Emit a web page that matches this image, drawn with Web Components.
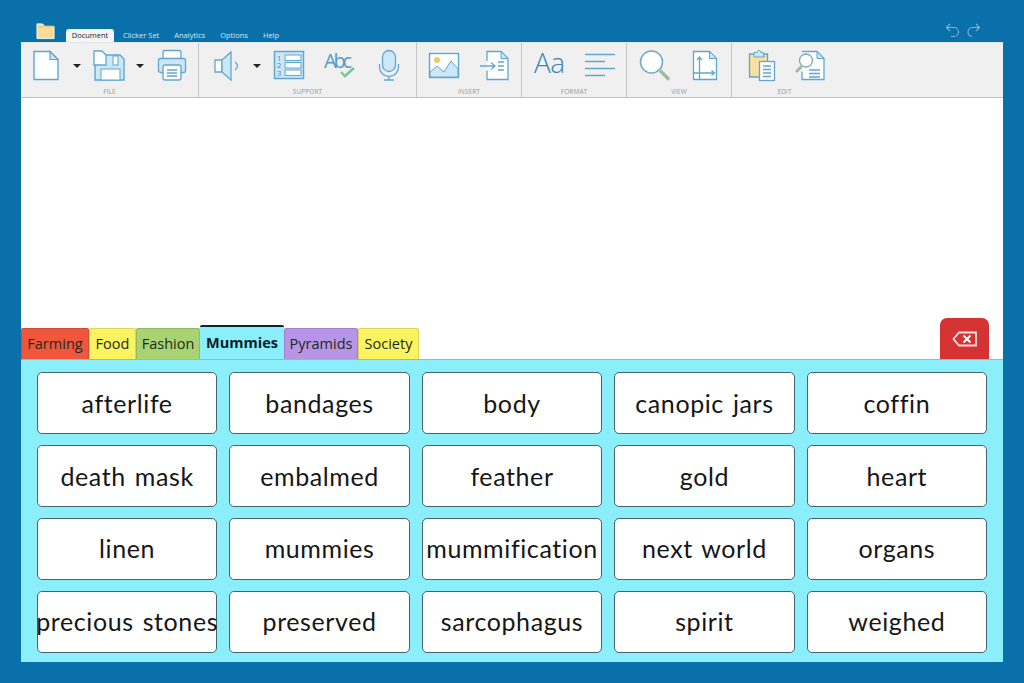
<!DOCTYPE html>
<html><head><meta charset="utf-8"><title>Clicker</title>
<style>
html,body{margin:0;padding:0;background:#0a70a9;}
</style></head><body>
<clicker-app></clicker-app>
<script>
const S='#62a6cf',F='#cce7f8',W='#fdfefe';
const L=`fill="none" stroke="${S}" stroke-width="1.3"`;
const ICONS={
 newdoc:`<path d="M4 2.500h16l8 8v20H4z" fill="${W}" stroke="${S}" stroke-width="1.4"/><path d="M20 2.500l8 8h-8z" fill="${F}" stroke="${S}" stroke-width="1.2"/>`,
 save:`<path d="M2 6h25l4 4v21H2z" fill="${F}" stroke="${S}" stroke-width="1.4"/><path d="M1 2h8l4 4v10H1z" fill="${W}" stroke="${S}" stroke-width="1.3"/><rect x="20" y="7" width="5" height="9" fill="${W}" stroke="${S}"/><rect x="8" y="20" width="19" height="11" fill="${W}" stroke="${S}"/>`,
 print:`<path d="M7 10V3a1.500 1.500 0 0 1 1.500-1.500h15A1.500 1.500 0 0 1 25 3v7" fill="${W}" stroke="${S}" stroke-width="1.3"/><rect x="2.500" y="9.500" width="27" height="14" rx="2" fill="${F}" stroke="${S}" stroke-width="1.3"/><rect x="7" y="16" width="18" height="15" rx="2" fill="${W}" stroke="${S}" stroke-width="1.3"/><path d="M11 21h10M11 24h10M11 27h10" ${L}/>`,
 speaker:`<path d="M4 11h7v12H4z" fill="${W}" stroke="${S}" stroke-width="1.3"/><path d="M11 11l9-8v28l-9-8z" fill="${F}" stroke="${S}" stroke-width="1.3"/><path d="M24 13q5 4 0 8" ${L}/>`,
 list:`<rect x="1.500" y="2.500" width="29" height="27" fill="${F}" stroke="${S}" stroke-width="1.5"/><rect x="12" y="6" width="16" height="5.500" fill="${W}" stroke="${S}"/><rect x="12" y="13.500" width="16" height="5.500" fill="${W}" stroke="${S}"/><rect x="12" y="21" width="16" height="5.500" fill="${W}" stroke="${S}"/><text x="4" y="11.500" font-family="Open Sans" font-size="7.500" fill="#3f89b8">1</text><text x="4" y="19" font-family="Open Sans" font-size="7.500" fill="#3f89b8">2</text><text x="4" y="26.500" font-family="Open Sans" font-size="7.500" fill="#3f89b8">3</text>`,
 abc:`<text x="0" y="19" font-family="Open Sans" font-size="20" fill="#5a9ac6" textLength="28">Abc</text><path d="M17 23l4 4 9-8" fill="none" stroke="#7cc595" stroke-width="2.400"/>`,
 mic:`<rect x="9.500" y="1.500" width="13" height="21" rx="6.500" fill="${F}" stroke="${S}" stroke-width="1.3"/><path d="M6.500 15v3a9.500 9.500 0 0 0 19 0v-3M16 27.500V31M11 31h10" ${L}/>`,
 image:`<rect x="1.500" y="4.500" width="29" height="24" fill="${W}" stroke="${S}" stroke-width="1.4"/><circle cx="9" cy="11" r="3" fill="#f2c56b"/><path d="M2 23l7-6 7 6 7-11 7 8v8H2z" fill="${F}" stroke="${S}"/>`,
 insert:`<path d="M8 12V2.500h14l7 7v21H8v-9" fill="${W}" stroke="${S}" stroke-width="1.3"/><path d="M22 2.500l7 7h-7z" fill="${F}" stroke="${S}"/><path d="M1 17h15M12 13.500l4 3.500-4 3.500M19 13h6M19 17h6M19 21h6" ${L}/>`,
 aa:`<text x="0" y="24" font-family="Open Sans" font-weight="300" font-size="28" fill="#3d85b5" textLength="31">Aa</text>`,
 align:`<path d="M1 5.500h30M1 12.500h20M1 19.500h30M1 26.500h20" ${L}/>`,
 mag:`<circle cx="12.500" cy="13" r="11" fill="${W}" stroke="#75a9bf" stroke-width="1.500"/><path d="M21 21.500l9 9" stroke="#9dbb98" stroke-width="3.200" fill="none"/>`,
 page:`<path d="M4.500 2.500h16l7 7v21H4.500z" fill="${W}" stroke="${S}" stroke-width="1.300"/><path d="M20.500 2.500l7 7h-7z" fill="${F}" stroke="${S}"/><path d="M10.500 30V8M8 11l2.500-3 2.500 3M4.500 24h21M22.500 21.500l3 2.500-3 2.500" ${L}/>`,
 clip:`<path d="M3.500 5h18v23h-18z" fill="#fbdf9e" stroke="${S}" stroke-width="1.300"/><path d="M8 6V3.500h3a2 2 0 0 1 4 0h2.500V6l1 2H8z" fill="${F}" stroke="${S}"/><rect x="13.500" y="12.500" width="15" height="19" fill="${W}" stroke="${S}" stroke-width="1.300"/><path d="M17 17h8M17 20.500h8M17 24h8M17 27.500h8" ${L}/>`,
 docsearch:`<path d="M8 2.500h15l7 7v21H8v-8" fill="${W}" stroke="${S}" stroke-width="1.300"/><path d="M23 2.500l7 7h-7z" fill="${F}" stroke="${S}"/><path d="M15 21h11M15 24.500h11M15 28h11" ${L}/><circle cx="12" cy="11.500" r="6.500" fill="${W}" stroke="#75a9bf" stroke-width="1.300"/><path d="M8 17l-6 6" stroke="#9dbb98" stroke-width="2.600" fill="none"/>`
};
class RbIcon extends HTMLElement{
 constructor(){super();
  const s=this.attachShadow({mode:'open'});
  s.innerHTML=`<style>:host{display:block;width:32px;height:32px;flex:none}svg{display:block;overflow:visible}</style>
  <svg width="32" height="32" viewBox="0 0 32 32">${ICONS[this.getAttribute('name')]||''}</svg>`;
 }
}
customElements.define('rb-icon',RbIcon);
class RbCaret extends HTMLElement{
 constructor(){super();
  this.attachShadow({mode:'open'}).innerHTML=`<style>:host{display:block;flex:none;width:0;height:0;border:4px solid transparent;border-top-color:#222;border-bottom:0;margin-top:1px}</style>`;
 }
}
customElements.define('rb-caret',RbCaret);
class RbGroup extends HTMLElement{
 constructor(){super();
  this.attachShadow({mode:'open'}).innerHTML=`<style>
  :host{display:flex;flex-direction:column;box-sizing:border-box;height:100%;border-right:1px solid #c6c6c6}
  .row{display:flex;align-items:center;height:32px;margin-top:6px}
  .lab{margin-top:auto;height:10px;margin-bottom:0;text-align:center;font:6.500px/10px "Open Sans",sans-serif;color:#9a9a9a;letter-spacing:.1px}
  .end{height:0}
  </style><div class="row"><slot></slot></div><div class="lab">${this.getAttribute('label')}</div>`;
 }
}
customElements.define('rb-group',RbGroup);
class RibbonBar extends HTMLElement{
 constructor(){super();
  const ic=(n,m)=>`<rb-icon name="${n}" style="margin-left:${m}px"></rb-icon>`;
  const ca=m=>`<rb-caret style="margin-left:${m}px"></rb-caret>`;
  this.attachShadow({mode:'open'}).innerHTML=`<style>
  :host{display:flex;height:56px;box-sizing:border-box;background:#f0f0f0;border-bottom:1px solid #bfbfbf;border-top:1px solid #dfe6ea}
  rb-group:last-child{border-right:0;flex:1}
  </style>
  <rb-group label="FILE" style="width:178px">${ic('newdoc',9)}${ca(11)}${ic('save',12)}${ca(11)}${ic('print',12)}</rb-group>
  <rb-group label="SUPPORT" style="width:218px">${ic('speaker',12)}${ca(10)}${ic('list',12)}${ic('abc',19)}${ic('mic',17)}</rb-group>
  <rb-group label="INSERT" style="width:105px">${ic('image',11)}${ic('insert',19)}</rb-group>
  <rb-group label="FORMAT" style="width:105px">${ic('aa',12)}${ic('align',18)}</rb-group>
  <rb-group label="VIEW" style="width:105px">${ic('mag',12)}${ic('page',18)}</rb-group>
  <rb-group label="EDIT" style="padding-right:166px">${ic('clip',14)}${ic('docsearch',16)}</rb-group>`;
 }
}
customElements.define('ribbon-bar',RibbonBar);
class TitleBar extends HTMLElement{
 constructor(){super();
  this.attachShadow({mode:'open'}).innerHTML=`<style>
  :host{display:flex;height:42px;align-items:flex-end;font-family:"Open Sans",sans-serif;font-size:7.500px;color:#d5e6f1}
  .folder{align-self:flex-start;margin:22px 0 0 36px}
  .tabs{display:flex;align-items:flex-end;margin-left:11px;height:13px}
  .t{height:13px;line-height:13px}
  .t.on{background:#f4f4f4;color:#222;border-radius:3px 3px 0 0;width:48px;text-align:center}
  .undo{margin-left:auto;margin-right:43px;align-self:flex-start;margin-top:22px;display:flex;gap:6px}
  svg{display:block}
  </style>
  <svg class="folder" viewBox="0 0 20 18" width="19" height="18"><path d="M1 1.500h6l2 2.500h10v13H1z" fill="#fbdc96" stroke="#f6f3e8" stroke-width="1"/><path d="M1 4.500h18" stroke="#e5c47c"/></svg>
  <div class="tabs"><div class="t on" style="margin-right:9px">Document</div><div class="t" style="margin-right:15px">Clicker Set</div><div class="t" style="margin-right:15px">Analytics</div><div class="t" style="margin-right:15px">Options</div><div class="t">Help</div></div>
  <div class="undo"><svg width="15" height="16" viewBox="0 0 15 16" fill="none" stroke="#7fb2d2" stroke-width="1.100"><path d="M5 2L1.500 5.500 5 9M1.500 5.500H9a4.500 4.500 0 0 1 0 9H6"/></svg><svg width="15" height="16" viewBox="0 0 15 16" fill="none" stroke="#7fb2d2" stroke-width="1.100"><path d="M10 2l3.500 3.500L10 9M13.500 5.500H7a4.500 4.500 0 0 0-1 9"/></svg></div>`;
 }
}
customElements.define('title-bar',TitleBar);
class SetTab extends HTMLElement{
 constructor(){super();
  const c=this.getAttribute('color'),on=this.hasAttribute('on');
  this.attachShadow({mode:'open'}).innerHTML=`<style>
  :host{display:block;box-sizing:border-box;flex:none;text-align:center;background:${c};
   font:${on?'700 ':''}14.500px/31px "Open Sans",sans-serif;color:${on?'#07212c':'#1e2a20'};
   height:${on?'35':'31'}px;border-radius:2px 2px 0 0;
   ${on?'border-top:2px solid #123;margin-bottom:-1px':'border:1px solid rgba(0,0,0,.12);border-bottom:0;line-height:30px'}}
  </style><slot></slot>`;
 }
}
customElements.define('set-tab',SetTab);
class WordCard extends HTMLElement{
 constructor(){super();
  this.attachShadow({mode:'open'}).innerHTML=`<style>
  :host{display:flex;align-items:center;justify-content:center;background:#fff;border:1px solid #46646e;border-radius:5px;box-sizing:border-box;
   font:25px/1 Lato,sans-serif;letter-spacing:.6px;word-spacing:2px;color:#161616;white-space:nowrap;min-width:0}
  </style><slot></slot>`;
 }
}
customElements.define('word-card',WordCard);
class ClickerApp extends HTMLElement{
 constructor(){super();
  const words=['afterlife','bandages','body','canopic jars','coffin','death mask','embalmed','feather','gold','heart','linen','mummies','mummification','next world','organs','precious stones','preserved','sarcophagus','spirit','weighed'];
  this.attachShadow({mode:'open'}).innerHTML=`<style>
  :host{display:flex;flex-direction:column;width:1024px;height:683px;box-sizing:border-box;padding:0 21px 21px;background:#0a70a9;overflow:hidden}
  .title{margin:0 -21px}
  .doc{flex:1;background:#fff;display:flex;align-items:flex-end}
  .tabs{display:flex;align-items:flex-end}
  .del{margin-left:auto;margin-right:14px;width:49px;height:41px;background:#d53234;border-radius:7px 7px 0 0;display:flex;align-items:center;justify-content:center}
  .panel{height:303px;box-sizing:border-box;background:#8aeffa;border-top:1px solid #6fc9d4;padding:12px 16px 9px;display:grid;grid-template-columns:repeat(5,1fr);grid-template-rows:repeat(4,1fr);column-gap:12.200px;row-gap:10.500px}
  </style>
  <title-bar class="title"></title-bar>
  <ribbon-bar></ribbon-bar>
  <div class="doc">
   <div class="tabs">
    <set-tab color="#ee573c" style="width:68px">Farming</set-tab>
    <set-tab color="#fbf35f" style="width:47px">Food</set-tab>
    <set-tab color="#a9d272" style="width:64px">Fashion</set-tab>
    <set-tab color="#8aeffa" on style="width:84px">Mummies</set-tab>
    <set-tab color="#b795e6" style="width:74px">Pyramids</set-tab>
    <set-tab color="#fbf35f" style="width:61px">Society</set-tab>
   </div>
   <div class="del"><svg width="26" height="16" viewBox="0 0 26 16"><path d="M7 1.500h17v13H7L1.500 8z" fill="none" stroke="#f6dcdc" stroke-width="1.800"/><path d="M11.500 4.500l7 7M18.500 4.500l-7 7" stroke="#fff" stroke-width="2"/></svg></div>
  </div>
  <div class="panel">${words.map(w=>`<word-card>${w}</word-card>`).join('')}</div>`;
 }
}
customElements.define('clicker-app',ClickerApp);
</script>
</body></html>
